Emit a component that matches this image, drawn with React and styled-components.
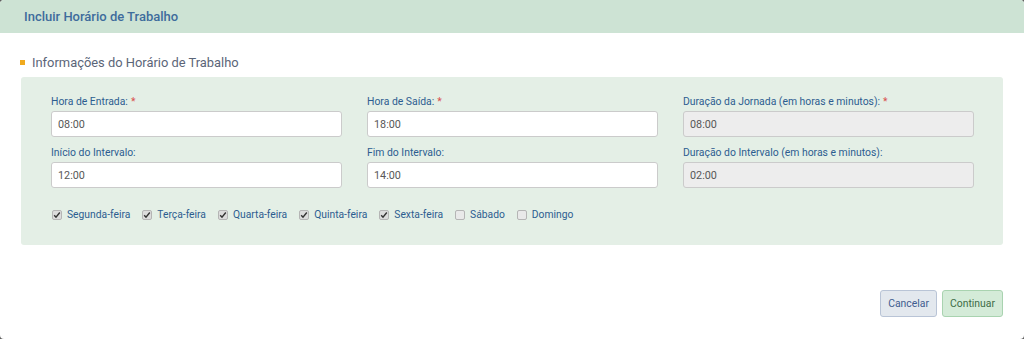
import React from "react";
import styled, { createGlobalStyle } from "styled-components";

const GlobalStyle = createGlobalStyle`
   html, body {
      margin: 0;
      padding: 0;
      background: #5f5f5f;
   }
   body {
      font-family: Roboto, "Liberation Sans", Arial, sans-serif;
   }
   * {
      box-sizing: border-box;
   }
`;

const Modal = styled.div`
   width: 1024px;
   height: 339px;
   background: #fff;
   border-radius: 4px;
   overflow: hidden;
   display: flex;
   flex-direction: column;
`;

const Header = styled.div`
   height: 33px;
   background: #cde3d4;
   display: flex;
   align-items: center;
   padding-left: 24px;

   h3 {
      margin: 0;
      font-size: 13px;
      font-weight: 500;
      color: #3e6c9c;
   }
`;

const Body = styled.div`
   padding: 21px 21px 0;
   flex: 1;
`;

const SectionTitle = styled.div`
   display: flex;
   align-items: center;
   gap: 7px;
   height: 16px;
   font-size: 12.9px;
   color: #5b6578;
   margin-bottom: 7px;

   &::before {
      content: "";
      width: 5px;
      height: 5px;
      background: #f0aa1e;
      margin-left: -1px;
   }
`;

const Panel = styled.div`
   background: #e4efe6;
   border-radius: 3px;
   padding: 18px 29px 24px 30px;
`;

const Grid = styled.div`
   display: grid;
   grid-template-columns: repeat(3, 1fr);
   column-gap: 25px;
   row-gap: 9px;
`;

const Field = styled.div`
   display: flex;
   flex-direction: column;
`;

const Label = styled.label`
   font-size: 10.4px;
   line-height: 14px;
   color: #2c5d90;
   margin-bottom: 2px;
   white-space: nowrap;

   span {
      color: #d9534f;
      margin-left: 3px;
   }
`;

const Input = styled.input`
   height: 26px;
   border: 1px solid #cbcbcb;
   border-radius: 3px;
   background: ${p => (p.readOnly ? "#ededed" : "#fff")};
   font-family: inherit;
   font-size: 10.8px;
   color: #585858;
   padding: 0 6px;
   outline: none;
`;

const Days = styled.div`
   display: flex;
   align-items: center;
   gap: 12px;
   margin-top: 20px;
   padding-left: 1px;
`;

const Day = styled.label`
   display: flex;
   align-items: center;
   gap: 5px;
   font-size: 10.3px;
   color: #2c5d90;
`;

const Box = styled.span`
   width: 10px;
   height: 10px;
   border: 1px solid #b5b5b5;
   border-radius: 2px;
   background: ${p => (p.checked ? "#dcdcdc" : "#e9e9e9")};
   display: flex;
   align-items: center;
   justify-content: center;
`;

const Footer = styled.div`
   display: flex;
   justify-content: flex-end;
   gap: 5px;
   padding: 0 21px 22px;
`;

const Button = styled.button`
   height: 27px;
   padding: 0 7px;
   border-radius: 3px;
   font-family: inherit;
   font-size: 10.4px;
   border: 1px solid ${p => (p.primary ? "#a9d3b0" : "#b9c4d6")};
   background: ${p => (p.primary ? "#d4ebd8" : "#e3e8ee")};
   color: ${p => (p.primary ? "#3d6b47" : "#3f5c8e")};
`;

const Check = () => (
   <svg width="8" height="8" viewBox="0 0 8 8">
      <path d="M1.2 4.2 L3 6.2 L6.8 1.5" fill="none" stroke="#333" strokeWidth="1.4" />
   </svg>
);

const fields = [
   { label: "Hora de Entrada:", value: "08:00", required: true },
   { label: "Hora de Saída:", value: "18:00", required: true },
   { label: "Duração da Jornada (em horas e minutos):", value: "08:00", required: true, readOnly: true },
   { label: "Início do Intervalo:", value: "12:00" },
   { label: "Fim do Intervalo:", value: "14:00" },
   { label: "Duração do Intervalo (em horas e minutos):", value: "02:00", readOnly: true }
];

const days = [
   { name: "Segunda-feira", checked: true },
   { name: "Terça-feira", checked: true },
   { name: "Quarta-feira", checked: true },
   { name: "Quinta-feira", checked: true },
   { name: "Sexta-feira", checked: true },
   { name: "Sábado", checked: false },
   { name: "Domingo", checked: false }
];

export default function App() {
   return (
      <>
         <GlobalStyle />
         <Modal>
            <Header>
               <h3>Incluir Horário de Trabalho</h3>
            </Header>

            <Body>
               <SectionTitle>Informações do Horário de Trabalho</SectionTitle>
               <Panel>
                  <Grid>
                     {fields.map(f => (
                        <Field key={f.label}>
                           <Label>
                              {f.label}
                              {f.required && <span>*</span>}
                           </Label>
                           <Input defaultValue={f.value} readOnly={f.readOnly} />
                        </Field>
                     ))}
                  </Grid>
                  <Days>
                     {days.map(d => (
                        <Day key={d.name}>
                           <Box checked={d.checked}>{d.checked && <Check />}</Box>
                           {d.name}
                        </Day>
                     ))}
                  </Days>
               </Panel>
            </Body>

            <Footer>
               <Button>Cancelar</Button>
               <Button primary>Continuar</Button>
            </Footer>
         </Modal>
      </>
   );
}
